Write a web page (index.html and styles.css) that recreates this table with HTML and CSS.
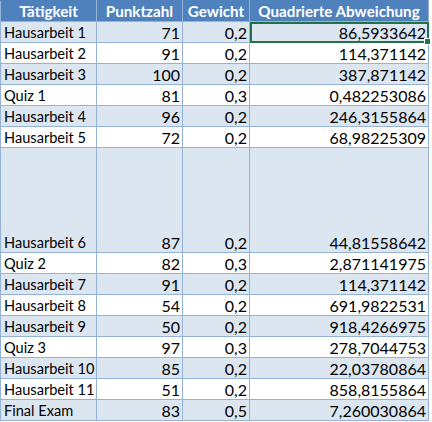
FILE: index.html
```html
<!DOCTYPE html>
<html lang="de">
<head>
<meta charset="utf-8">
<link rel="stylesheet" href="styles.css">
</head>
<body>
<table class="sheet">
  <colgroup>
    <col class="c1"><col class="c2"><col class="c3"><col class="c4">
  </colgroup>
  <thead>
    <tr><th>Tätigkeit</th><th>Punktzahl</th><th>Gewicht</th><th>Quadrierte Abweichung</th></tr>
  </thead>
  <tbody>
    <tr class="alt"><td>Hausarbeit 1</td><td class="num">71</td><td class="num">0,2</td><td class="num sel">86,5933642<span class="handle"></span></td></tr>
    <tr><td>Hausarbeit 2</td><td class="num">91</td><td class="num">0,2</td><td class="num">114,371142</td></tr>
    <tr class="alt"><td>Hausarbeit 3</td><td class="num">100</td><td class="num">0,2</td><td class="num">387,871142</td></tr>
    <tr><td>Quiz 1</td><td class="num">81</td><td class="num">0,3</td><td class="num">0,482253086</td></tr>
    <tr class="alt"><td>Hausarbeit 4</td><td class="num">96</td><td class="num">0,2</td><td class="num">246,3155864</td></tr>
    <tr><td>Hausarbeit 5</td><td class="num">72</td><td class="num">0,2</td><td class="num">68,98225309</td></tr>
    <tr class="alt tall"><td>Hausarbeit 6</td><td class="num">87</td><td class="num">0,2</td><td class="num">44,81558642</td></tr>
    <tr><td>Quiz 2</td><td class="num">82</td><td class="num">0,3</td><td class="num">2,871141975</td></tr>
    <tr class="alt"><td>Hausarbeit 7</td><td class="num">91</td><td class="num">0,2</td><td class="num">114,371142</td></tr>
    <tr><td>Hausarbeit 8</td><td class="num">54</td><td class="num">0,2</td><td class="num">691,9822531</td></tr>
    <tr class="alt"><td>Hausarbeit 9</td><td class="num">50</td><td class="num">0,2</td><td class="num">918,4266975</td></tr>
    <tr><td>Quiz 3</td><td class="num">97</td><td class="num">0,3</td><td class="num">278,7044753</td></tr>
    <tr class="alt"><td>Hausarbeit 10</td><td class="num">85</td><td class="num">0,2</td><td class="num">22,03780864</td></tr>
    <tr><td>Hausarbeit 11</td><td class="num">51</td><td class="num">0,2</td><td class="num">858,8155864</td></tr>
    <tr class="alt"><td>Final Exam</td><td class="num">83</td><td class="num">0,5</td><td class="num">7,260030864</td></tr>
  </tbody>
</table>
</body>
</html>
```
FILE: styles.css
```css
html, body {
  margin: 0;
  padding: 0;
  background: #ffffff;
}
.sheet {
  border-collapse: collapse;
  table-layout: fixed;
  width: 429px;
  font-family: Lato, "Open Sans", sans-serif;
  font-size: 14.6px;
  color: #000000;
}
.c1 { width: 96px; }
.c2 { width: 86px; }
.c3 { width: 67px; }
.c4 { width: 179px; }
.sheet th {
  background: #4f81bd;
  color: #ffffff;
  font-size: 15.2px;
  font-weight: bold;
  text-align: center;
  height: 20px;
  padding: 0;
  border: 1px solid #95b3d7;
  border-top-color: #4f81bd;
  vertical-align: bottom;
  line-height: 19px;
  white-space: nowrap;
  overflow: hidden;
}
.sheet td {
  height: 20px;
  padding: 0 2px 0 3px;
  border: 1px solid #95b3d7;
  vertical-align: bottom;
  line-height: 19px;
  white-space: nowrap;
  overflow: hidden;
}
.sheet tr.alt td {
  background: #dce6f1;
}
.sheet tr.tall td {
  height: 104px;
}
.sheet td.num {
  text-align: right;
  font-size: 16px;
}
.sheet td.sel {
  position: relative;
  overflow: visible;
  outline: 2px solid #217346;
  outline-offset: -2px;
}
.handle {
  position: absolute;
  right: -3px;
  bottom: -3px;
  width: 5px;
  height: 5px;
  background: #217346;
  border: 1px solid #ffffff;
}
```
